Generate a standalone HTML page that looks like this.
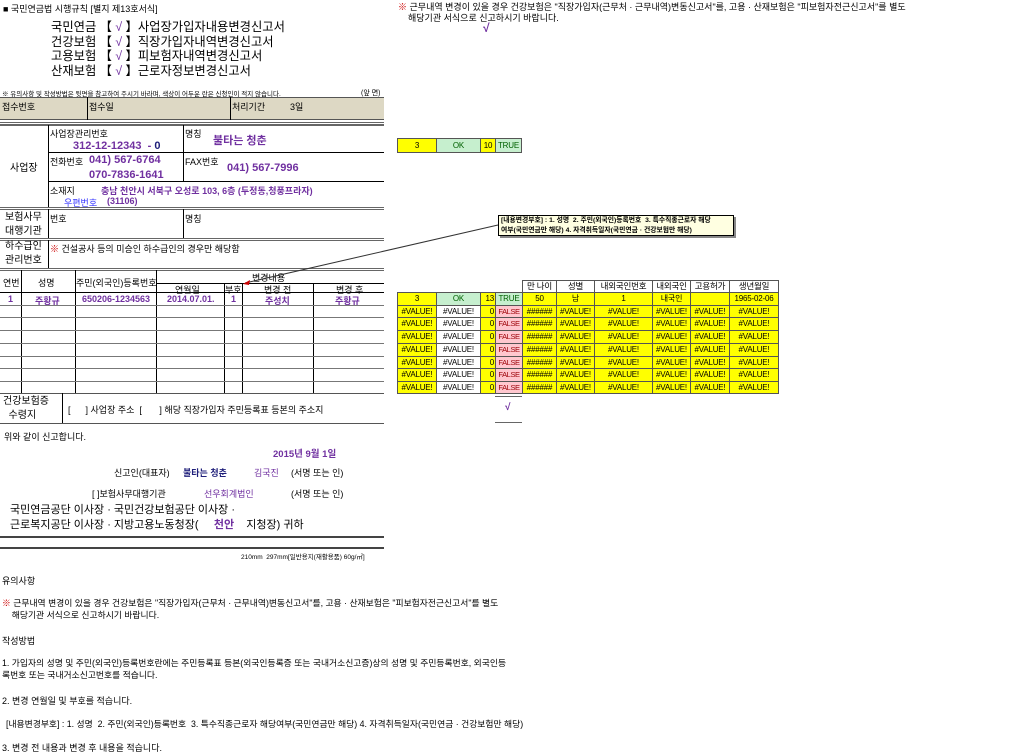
<!DOCTYPE html>
<html><head><meta charset="utf-8"><style>
*{margin:0;padding:0;box-sizing:border-box}
body{width:1024px;height:753px;background:#fff;position:relative;overflow:hidden;font-family:"Liberation Sans","Noto Sans CJK KR","NanumGothic",sans-serif;color:#000;font-size:9px}
.a{position:absolute;white-space:nowrap}
.h{position:absolute;background:#000;height:1px}
.v{position:absolute;background:#000;width:1px}
.p{color:#7030a0;font-weight:bold}
.c{position:absolute;border:1px solid #555;text-align:center;font-size:8px;line-height:11px;overflow:hidden;white-space:nowrap;letter-spacing:-0.2px}
.y{background:#ffff00}
.g{background:#c6efce;color:#006100}
.r{background:#ffc7ce;color:#9c0006}
.w{background:#fff}
</style></head><body>
<div class="a" style="left:3px;top:2px;font-size:9px">■ 국민연금법 시행규칙 [별지 제13호서식]</div>
<div class="a" style="left:51px;top:20px;font-size:12.3px;line-height:14.5px">국민연금 【 <span style="color:#7030a0">√</span> 】사업장가입자내용변경신고서<br>건강보험 【 <span style="color:#7030a0">√</span> 】직장가입자내역변경신고서<br>고용보험 【 <span style="color:#7030a0">√</span> 】피보험자내역변경신고서<br>산재보험 【 <span style="color:#7030a0">√</span> 】근로자정보변경신고서</div>
<div class="a" style="left:2px;top:88px;font-size:6.5px">※ 유의사항 및 작성방법은 뒷면을 참고하여 주시기 바라며, 색상이 어두운 란은 신청인이 적지 않습니다.</div>
<div class="a" style="left:361px;top:88px;font-size:7px">(앞 면)</div>
<div class="a" style="left:0;top:97px;width:384px;height:23px;background:#ddd8c4;border-top:1px solid #555;border-bottom:1px solid #555"></div>
<div class="v" style="left:87px;top:97px;height:23px"></div>
<div class="v" style="left:230px;top:97px;height:23px"></div>
<div class="a" style="left:2px;top:100px">접수번호</div>
<div class="a" style="left:89px;top:100px">접수일</div>
<div class="a" style="left:232px;top:100px">처리기간</div>
<div class="a" style="left:290px;top:100px">3일</div>
<div class="h" style="left:0;top:122px;width:384px;background:#666"></div>
<div class="h" style="left:0;top:124px;width:384px;background:#666;height:2px"></div>
<div class="v" style="left:48px;top:125px;height:82px"></div>
<div class="v" style="left:183px;top:125px;height:56px"></div>
<div class="h" style="left:48px;top:152px;width:336px"></div>
<div class="h" style="left:48px;top:181px;width:336px"></div>
<div class="h" style="left:0;top:207px;width:384px;background:#666"></div>
<div class="h" style="left:0;top:209px;width:384px;background:#666"></div>
<div class="a" style="left:10px;top:159px;font-size:10px">사업장</div>
<div class="a" style="left:50px;top:127px">사업장관리번호</div>
<div class="a p" style="left:73px;top:140px;font-size:11px">312-12-12343 &nbsp;- <span style="color:#1f1f7a">0</span></div>
<div class="a" style="left:185px;top:127px">명칭</div>
<div class="a p" style="left:213px;top:132px;font-size:11px">불타는 청춘</div>
<div class="a" style="left:50px;top:155px">전화번호</div>
<div class="a p" style="left:89px;top:154px;font-size:11px">041) 567-6764</div>
<div class="a p" style="left:89px;top:169px;font-size:11px">070-7836-1641</div>
<div class="a" style="left:185px;top:155px">FAX번호</div>
<div class="a p" style="left:227px;top:162px;font-size:11px">041) 567-7996</div>
<div class="a" style="left:50px;top:184px">소재지</div>
<div class="a p" style="left:101px;top:184px;font-size:9px">충남 천안시 서북구 오성로 103, 6층 (두정동,청풍프라자)</div>
<div class="a" style="left:64px;top:196px;color:#3333ff">우편번호</div>
<div class="a p" style="left:107px;top:196px">(31106)</div>
<div class="v" style="left:48px;top:209px;height:29px"></div>
<div class="v" style="left:183px;top:209px;height:29px"></div>
<div class="a" style="left:5px;top:211px;font-size:10px;line-height:14px">보험사무<br>대행기관</div>
<div class="a" style="left:50px;top:212px">번호</div>
<div class="a" style="left:185px;top:212px">명칭</div>
<div class="h" style="left:0;top:238px;width:384px;background:#666"></div>
<div class="h" style="left:0;top:240px;width:384px;background:#666"></div>
<div class="v" style="left:48px;top:240px;height:28px"></div>
<div class="a" style="left:5px;top:240px;font-size:10px;line-height:14px">하수급인<br>관리번호</div>
<div class="a" style="left:50px;top:242px"><span style="color:#c00">※</span> 건설공사 등의 미승인 하수급인의 경우만 해당함</div>
<div class="h" style="left:0;top:268px;width:384px;background:#666"></div>
<div class="h" style="left:0;top:270px;width:384px;background:#666"></div>
<div class="h" style="left:156px;top:283px;width:228px"></div>
<div class="h" style="left:0;top:292px;width:384px"></div>
<div class="v" style="left:21px;top:270px;height:123px"></div>
<div class="v" style="left:75px;top:270px;height:123px"></div>
<div class="v" style="left:156px;top:270px;height:123px"></div>
<div class="v" style="left:224px;top:283px;height:110px"></div>
<div class="v" style="left:242px;top:283px;height:110px"></div>
<div class="v" style="left:313px;top:283px;height:110px"></div>
<div class="a" style="left:3px;top:276px">연번</div>
<div class="a" style="left:38px;top:276px">성명</div>
<div class="a" style="left:76px;top:276px">주민(외국인)등록번호</div>
<div class="a" style="left:252px;top:271px">변경내용</div>
<div class="a" style="left:175px;top:283px">연월일</div>
<div class="a" style="left:225px;top:283px">부호</div>
<div class="a" style="left:264px;top:283px">변경 전</div>
<div class="a" style="left:336px;top:283px">변경 후</div>
<div class="a p" style="left:8px;top:294px">1</div>
<div class="a p" style="left:35px;top:294px">주황규</div>
<div class="a p" style="left:82px;top:294px">650206-1234563</div>
<div class="a p" style="left:167px;top:294px">2014.07.01.</div>
<div class="a p" style="left:231px;top:294px">1</div>
<div class="a p" style="left:265px;top:294px">주성치</div>
<div class="a p" style="left:335px;top:294px">주황규</div>
<div class="h" style="left:0;top:305px;width:384px;background:#777"></div>
<div class="h" style="left:0;top:317px;width:384px;background:#777"></div>
<div class="h" style="left:0;top:330px;width:384px;background:#777"></div>
<div class="h" style="left:0;top:343px;width:384px;background:#777"></div>
<div class="h" style="left:0;top:356px;width:384px;background:#777"></div>
<div class="h" style="left:0;top:368px;width:384px;background:#777"></div>
<div class="h" style="left:0;top:381px;width:384px;background:#777"></div>
<div class="h" style="left:0;top:393px;width:384px;background:#555"></div>
<div class="v" style="left:62px;top:393px;height:30px"></div>
<div class="a" style="left:3px;top:395px;font-size:10px;line-height:14px">건강보험증<br>&nbsp;&nbsp;수령지</div>
<div class="a" style="left:68px;top:403px">[ &nbsp;&nbsp;&nbsp;&nbsp;&nbsp;] 사업장 주소 &nbsp;[ &nbsp;&nbsp;&nbsp;&nbsp;&nbsp;&nbsp;] 해당 직장가입자 주민등록표 등본의 주소지</div>
<div class="h" style="left:0;top:423px;width:384px;background:#555"></div>
<div class="a" style="left:4px;top:430px">위와 같이 신고합니다.</div>
<div class="a p" style="left:273px;top:446px;font-size:9.5px">2015년 9월 1일</div>
<div class="a" style="left:114px;top:466px">신고인(대표자)</div>
<div class="a" style="left:183px;top:466px;color:#1f1f7a;font-weight:bold">불타는 청춘</div>
<div class="a" style="left:254px;top:466px;color:#7030a0">김국진</div>
<div class="a" style="left:291px;top:466px">(서명 또는 인)</div>
<div class="a" style="left:92px;top:487px">[ ]보험사무대행기관</div>
<div class="a" style="left:204px;top:487px;color:#7030a0">선우회계법인</div>
<div class="a" style="left:291px;top:487px">(서명 또는 인)</div>
<div class="a" style="left:10px;top:503px;font-size:11px;line-height:15px">국민연금공단 이사장 · 국민건강보험공단 이사장 ·<br>근로복지공단 이사장 · 지방고용노동청장( &nbsp;&nbsp;&nbsp;&nbsp;<span style="color:#7030a0;font-weight:bold">천안</span> &nbsp;&nbsp;&nbsp;지청장) 귀하</div>
<div class="h" style="left:0;top:536px;width:384px;height:2px;background:#444"></div>
<div class="h" style="left:0;top:547px;width:384px;height:2px;background:#444"></div>
<div class="a" style="left:241px;top:551px;font-size:6.5px">210mm &nbsp;297mm[일반용지(재활용품) 60g/㎡]</div>
<div class="a" style="left:2px;top:574px">유의사항</div>
<div class="a" style="left:2px;top:597px;line-height:12px;font-size:8.8px"><span style="color:#c00">※</span> 근무내역 변경이 있을 경우 건강보험은 "직장가입자(근무처 · 근무내역)변동신고서"를, 고용 · 산재보험은 "피보험자전근신고서"를 별도<br>&nbsp;&nbsp;&nbsp;&nbsp;해당기관 서식으로 신고하시기 바랍니다.</div>
<div class="a" style="left:2px;top:634px">작성방법</div>
<div class="a" style="left:2px;top:657px;line-height:12px;font-size:8.8px">1. 가입자의 성명 및 주민(외국인)등록번호란에는 주민등록표 등본(외국인등록증 또는 국내거소신고증)상의 성명 및 주민등록번호, 외국인등<br>록번호 또는 국내거소신고번호를 적습니다.</div>
<div class="a" style="left:2px;top:694px">2. 변경 연월일 및 부호를 적습니다.</div>
<div class="a" style="left:6px;top:717px;font-size:8.8px">[내용변경부호] : 1. 성명 &nbsp;2. 주민(외국인)등록번호 &nbsp;3. 특수직종근로자 해당여부(국민연금만 해당) 4. 자격취득일자(국민연금 · 건강보험만 해당)</div>
<div class="a" style="left:2px;top:741px">3. 변경 전 내용과 변경 후 내용을 적습니다.</div>

<div class="a" style="left:398px;top:2px;line-height:11px"><span style="color:#c00">※</span> 근무내역 변경이 있을 경우 건강보험은 "직장가입자(근무처 · 근무내역)변동신고서"를, 고용 · 산재보험은 "피보험자전근신고서"를 별도<br>&nbsp;&nbsp;&nbsp;&nbsp;해당기관 서식으로 신고하시기 바랍니다.</div>
<div class="a" style="left:483px;top:21px;color:#7030a0;font-size:12px;font-weight:bold">√</div>

<div class="c y" style="left:397px;top:138px;width:40px;height:15px;line-height:13px">3</div>
<div class="c g" style="left:436px;top:138px;width:45px;height:15px;line-height:13px">OK</div>
<div class="c y" style="left:480px;top:138px;width:16px;height:15px;line-height:13px;color:#000">10</div>
<div class="c g" style="left:495px;top:138px;width:27px;height:15px;line-height:13px">TRUE</div>

<svg class="a" style="left:0;top:0" width="1024" height="753"><line x1="498" y1="225" x2="245" y2="283" stroke="#333" stroke-width="1"/><polygon points="243,284 250,280 249,285" fill="#c00"/></svg>
<div class="a" style="left:498px;top:215px;width:236px;height:21px;background:#ffffe1;border:1px solid #000;box-shadow:2px 2px 0 #888;font-size:6.8px;font-weight:bold;line-height:9.5px;padding:0 2px">[내용변경부호] : 1. 성명 &nbsp;2. 주민(외국인)등록번호 &nbsp;3. 특수직종근로자 해당<br>여부(국민연금만 해당) 4. 자격취득일자(국민연금 · 건강보험만 해당)</div>

<div id="rt"></div>
<script>
var xs=[397,436,480,495,522,556,594,652,690,729,778];
var html='';
var hd=['','','','','만 나이','성별','내외국인번호','내외국인','고용허가','생년월일'];
var ys=[280,292,305,317,330,343,356,368,381,393];
function cell(i,y,h,cls,t,st){html+='<div class="c '+cls+'" style="left:'+xs[i]+'px;top:'+y+'px;width:'+(xs[i+1]-xs[i]+1)+'px;height:'+(h+1)+'px;line-height:'+(h-1)+'px;'+(st||'')+'">'+t+'</div>';}
for(var i=4;i<10;i++)cell(i,280,12,'w',hd[i],'font-size:8.5px');
var r1=[['y','3'],['g','OK'],['y','13'],['g','TRUE'],['y','50'],['y','남'],['y','1'],['y','내국인'],['y',''],['y','1965-02-06']];
for(var i=0;i<10;i++)cell(i,292,13,r1[i][0],r1[i][1],i==2?'text-align:right;padding-right:1px':'');
for(var r=2;r<9;r++){var y=ys[r],h=ys[r+1]-y;
var d=[['y','#VALUE!'],['w','#VALUE!'],['y','0'],['r','FALSE'],['y','######'],['y','#VALUE!'],['y','#VALUE!'],['y','#VALUE!'],['y','#VALUE!'],['y','#VALUE!']];
for(var i=0;i<10;i++)cell(i,y,h,d[i][0],d[i][1],i==2?'text-align:right;padding-right:1px':(i==3?'font-size:7.5px;letter-spacing:-0.4px':''));}
document.getElementById('rt').innerHTML=html;
</script>
<div class="h" style="left:495px;top:396px;width:27px;background:#666"></div>
<div class="a" style="left:505px;top:402px;color:#7030a0;font-size:10px;font-weight:bold">√</div>
<div class="h" style="left:495px;top:422px;width:27px;background:#666"></div>
</body></html>
